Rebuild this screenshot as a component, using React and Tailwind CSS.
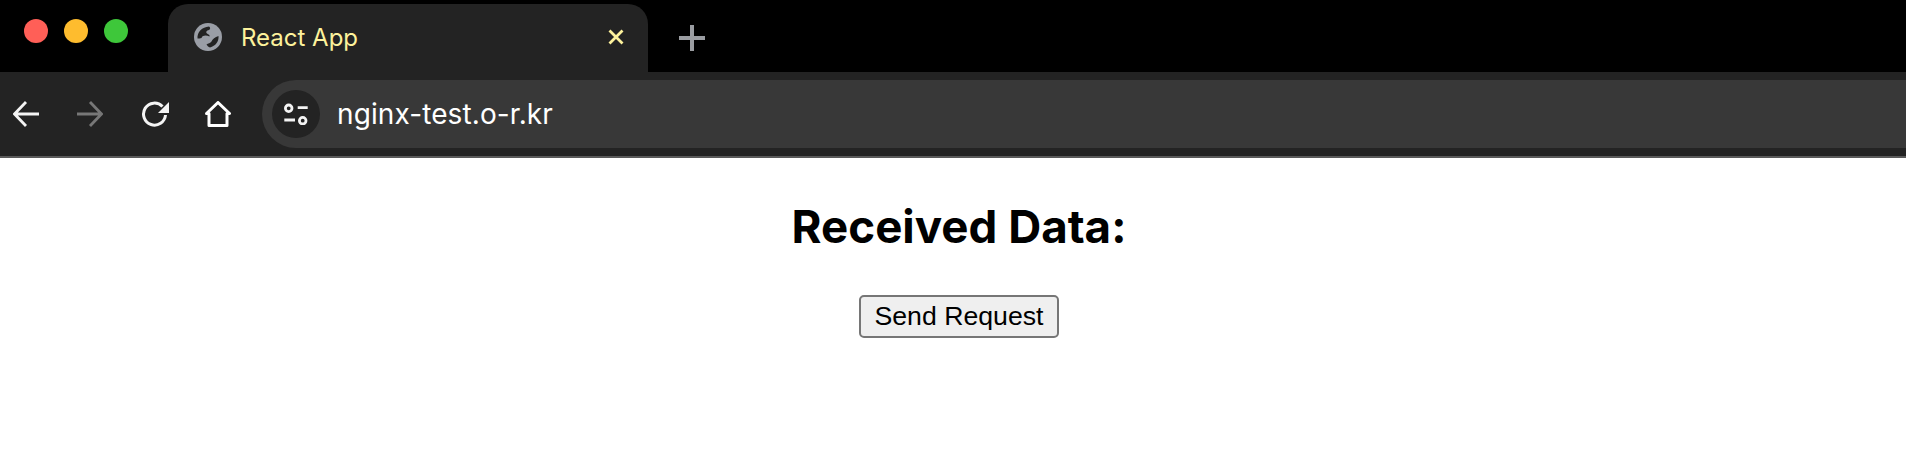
export default function App() {
  return (
    <div className="h-[464px] w-[1906px] overflow-hidden bg-white font-['Inter',sans-serif]">
      {/* tab strip */}
      <div className="flex h-[72px] bg-black">
        <div className="flex w-[168px] items-start gap-4 pl-6 pt-[19px]">
          <span className="h-6 w-6 rounded-full bg-[#ff5f57]"></span>
          <span className="h-6 w-6 rounded-full bg-[#febc2e]"></span>
          <span className="h-6 w-6 rounded-full bg-[#3ec73a]"></span>
        </div>
        <div className="mt-1 flex h-[68px] w-[480px] items-center rounded-t-[20px] bg-[#232323] pb-[3px] pl-[26px] pr-6">
          <svg width="28" height="28" viewBox="0 0 28 28" className="shrink-0">
            <circle cx="14" cy="14" r="14" fill="#9a9ea6" />
            <path d="M3.500 15.500C3 9 8 4 15 3.500c1.500 1 1.500 2.500 0 3.500-2.500.5-3.500 2-2 3.500 1.500 1 3 1.500 2.500 3-3-1.500-7-1.500-8 1.500-1.500.5-2.500.5-4 .5z" fill="#232323" />
            <path d="M24.500 13c.5 5.500-3 10-8.500 11.500-1.500-.5-2.500-1.500-3.500-3 1.500-1.500 4-1 5-3 1-2.500 3.500-4.500 7-5.500z" fill="#232323" />
          </svg>
          <span className="ml-[19px] flex-1 pt-[2px] text-[24px] text-[#fdf29c]">React App</span>
          <svg width="16" height="16" viewBox="0 0 16 16" className="shrink-0">
            <path d="M1.500 1.500l13 13M14.500 1.500l-13 13" stroke="#fdf29c" strokeWidth="2.800" fill="none" />
          </svg>
        </div>
        <div className="ml-[31px] flex items-center pt-[3px]">
          <svg width="26" height="26" viewBox="0 0 26 26">
            <path d="M13 0v26M0 13h26" stroke="#9a9ca1" strokeWidth="4" fill="none" />
          </svg>
        </div>
      </div>

      {/* toolbar */}
      <div className="flex h-[86px] items-center border-b-2 border-[#5a5a5a] bg-[#232323] pl-[13px]">
        <svg width="26" height="26" viewBox="0 0 26 26" className="shrink-0">
          <path d="M26 13H1.500M13 1L1.500 13 13 25" stroke="#f4f4f4" strokeWidth="2.800" fill="none" />
        </svg>
        <svg width="26" height="26" viewBox="0 0 26 26" className="ml-[38px] shrink-0">
          <path d="M0 13h24.500M13 1l11.500 12L13 25" stroke="#777777" strokeWidth="2.800" fill="none" />
        </svg>
        <svg width="28" height="26" viewBox="0 0 28 26" className="ml-[38px] shrink-0">
          <path d="M21.500 5.500A11 11 0 1 0 24.500 14" stroke="#f4f4f4" strokeWidth="3" fill="none" />
          <path d="M28 1v11H17z" fill="#f4f4f4" />
        </svg>
        <svg width="26" height="26" viewBox="0 0 26 26" className="ml-[36px] shrink-0">
          <path d="M1.500 12.500L13 1.500l11.500 11h-2.500v12H4v-12z" stroke="#ffffff" strokeWidth="3" strokeLinejoin="round" fill="none" />
        </svg>
        <div className="ml-[31px] flex h-[68px] flex-1 items-center rounded-l-[34px] bg-[#383838] pl-[10px]">
          <div className="flex h-12 w-12 items-center justify-center rounded-full bg-[#232323]">
            <svg width="26" height="22" viewBox="0 0 26 22">
              <circle cx="5.700" cy="5.300" r="3.300" stroke="#f4f4f4" strokeWidth="2.800" fill="none" />
              <path d="M14.700 4.700h10M1.300 17h10.700" stroke="#f4f4f4" strokeWidth="2.800" fill="none" />
              <circle cx="19.700" cy="17.700" r="3.300" stroke="#f4f4f4" strokeWidth="2.800" fill="none" />
            </svg>
          </div>
          <span className="ml-[17px] text-[28px] tracking-[0.1px] text-white">nginx-test.o-r.kr</span>
        </div>
      </div>

      {/* page */}
      <div className="flex flex-col items-center pl-3">
        <h1 className="mt-[41px] text-[45.700px] font-bold leading-[56px] text-black">Received Data:</h1>
        <button className="mt-[40px] h-[43px] w-[200px] rounded-[5px] border-2 border-[#767676] bg-[#efefef] font-['Liberation_Sans',sans-serif] text-[26.670px] leading-none text-black">
          Send Request
        </button>
      </div>
    </div>
  );
}
